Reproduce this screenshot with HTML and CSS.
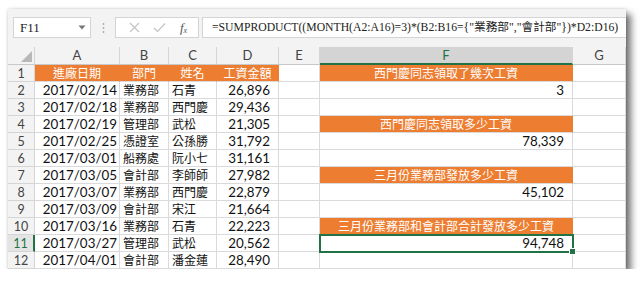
FILE: index.html
```html
<!DOCTYPE html>
<html lang="zh-Hant">
<head>
    <meta charset="UTF-8">
    <title>SUMPRODUCT</title>
    <link rel="stylesheet" href="styles.css">
</head>
<body>
    <div class="window">
        <!-- formula bar -->
        <div class="formula-bar">
            <div class="name-box">
                <span>F11</span>
                <svg width="8" height="5" viewBox="0 0 8 5"><path d="M0.5 0.5 L7.5 0.5 L4 4.5 Z" fill="#777"/></svg>
            </div>
            <div class="grip">
                <svg width="3" height="12" viewBox="0 0 3 12"><circle cx="1.5" cy="2" r="0.9" fill="#aaa"/><circle cx="1.5" cy="6" r="0.9" fill="#aaa"/><circle cx="1.5" cy="10" r="0.9" fill="#aaa"/></svg>
            </div>
            <div class="fx-buttons">
                <svg width="11" height="11" viewBox="0 0 11 11"><path d="M1 1 L10 10 M10 1 L1 10" stroke="#c3c3c3" stroke-width="1.1"/></svg>
                <svg width="13" height="11" viewBox="0 0 13 11"><path d="M1 6 L4.5 9.5 L12 1.5" stroke="#c3c3c3" stroke-width="1.2" fill="none"/></svg>
                <span class="fx"><i>f</i><sub>x</sub></span>
            </div>
            <div class="formula">=SUMPRODUCT((MONTH(A2:A16)=3)*(B2:B16={"業務部","會計部"})*D2:D16)</div>
        </div>

        <!-- sheet -->
        <div class="sheet">
            <div class="corner"><span class="tri"></span></div>
            <div class="ch">A</div>
            <div class="ch">B</div>
            <div class="ch">C</div>
            <div class="ch">D</div>
            <div class="ch">E</div>
            <div class="ch ch-sel">F</div>
            <div class="ch">G</div>

            <div class="rh">1</div>
            <div class="cell hd">進廠日期</div>
            <div class="cell hd">部門</div>
            <div class="cell hd">姓名</div>
            <div class="cell hd">工資金額</div>
            <div class="cell"></div>
            <div class="cell hd">西門慶同志領取了幾次工資</div>
            <div class="cell"></div>

            <div class="rh">2</div>
            <div class="cell date">2017/02/14</div>
            <div class="cell txt">業務部</div>
            <div class="cell txt">石青</div>
            <div class="cell num">26,896</div>
            <div class="cell"></div>
            <div class="cell num">3</div>
            <div class="cell"></div>

            <div class="rh">3</div>
            <div class="cell date">2017/02/18</div>
            <div class="cell txt">業務部</div>
            <div class="cell txt">西門慶</div>
            <div class="cell num">29,436</div>
            <div class="cell"></div>
            <div class="cell"></div>
            <div class="cell"></div>

            <div class="rh">4</div>
            <div class="cell date">2017/02/19</div>
            <div class="cell txt">管理部</div>
            <div class="cell txt">武松</div>
            <div class="cell num">21,305</div>
            <div class="cell"></div>
            <div class="cell hd">西門慶同志領取多少工資</div>
            <div class="cell"></div>

            <div class="rh">5</div>
            <div class="cell date">2017/02/25</div>
            <div class="cell txt">憑證室</div>
            <div class="cell txt">公孫勝</div>
            <div class="cell num">31,792</div>
            <div class="cell"></div>
            <div class="cell num">78,339</div>
            <div class="cell"></div>

            <div class="rh">6</div>
            <div class="cell date">2017/03/01</div>
            <div class="cell txt">船務處</div>
            <div class="cell txt">阮小七</div>
            <div class="cell num">31,161</div>
            <div class="cell"></div>
            <div class="cell"></div>
            <div class="cell"></div>

            <div class="rh">7</div>
            <div class="cell date">2017/03/05</div>
            <div class="cell txt">會計部</div>
            <div class="cell txt">李師師</div>
            <div class="cell num">27,982</div>
            <div class="cell"></div>
            <div class="cell hd">三月份業務部發放多少工資</div>
            <div class="cell"></div>

            <div class="rh">8</div>
            <div class="cell date">2017/03/07</div>
            <div class="cell txt">業務部</div>
            <div class="cell txt">西門慶</div>
            <div class="cell num">22,879</div>
            <div class="cell"></div>
            <div class="cell num">45,102</div>
            <div class="cell"></div>

            <div class="rh">9</div>
            <div class="cell date">2017/03/09</div>
            <div class="cell txt">會計部</div>
            <div class="cell txt">宋江</div>
            <div class="cell num">21,664</div>
            <div class="cell"></div>
            <div class="cell"></div>
            <div class="cell"></div>

            <div class="rh">10</div>
            <div class="cell date">2017/03/16</div>
            <div class="cell txt">業務部</div>
            <div class="cell txt">石青</div>
            <div class="cell num">22,223</div>
            <div class="cell"></div>
            <div class="cell hd">三月份業務部和會計部合計發放多少工資</div>
            <div class="cell"></div>

            <div class="rh rh-sel">11</div>
            <div class="cell date">2017/03/27</div>
            <div class="cell txt">管理部</div>
            <div class="cell txt">武松</div>
            <div class="cell num">20,562</div>
            <div class="cell"></div>
            <div class="cell num sel">94,748</div>
            <div class="cell"></div>

            <div class="rh">12</div>
            <div class="cell date">2017/04/01</div>
            <div class="cell txt">會計部</div>
            <div class="cell txt">潘金蓮</div>
            <div class="cell num">28,490</div>
            <div class="cell"></div>
            <div class="cell"></div>
            <div class="cell"></div>
        </div>
    </div>
</body>
</html>
```

FILE: styles.css
```css
* {
    box-sizing: border-box;
}

body {
    margin: 0;
    padding: 9px 0 0 8px;
    background-color: white;
    font-family: Lato, "Noto Sans CJK TC", sans-serif;
}

.window {
    width: 618px;
    height: 260px;
    background-color: white;
    overflow: hidden;
    box-shadow: 5px 5px 7px rgba(0, 0, 0, 0.55), 0 0 3px rgba(0, 0, 0, 0.18);
}

/* formula bar */
.formula-bar {
    height: 38px;
    background-color: #f3f3f3;
    display: flex;
    align-items: flex-start;
    padding: 8px 0 0 5px;
}

.name-box {
    width: 78px;
    height: 21px;
    background-color: white;
    border: 1px solid #d4d4d4;
    display: flex;
    align-items: center;
    justify-content: space-between;
    padding: 0 4px 0 6px;
    font-family: "Liberation Serif", "Noto Sans CJK TC", serif;
    font-size: 13px;
    color: #222;
}

.grip {
    width: 24px;
    height: 21px;
    display: flex;
    align-items: center;
    justify-content: center;
}

.fx-buttons {
    width: 84px;
    height: 21px;
    background-color: white;
    border: 1px solid #d4d4d4;
    display: flex;
    align-items: center;
    justify-content: space-around;
    padding: 0 4px 0 6px;
}

.fx {
    font-family: "Liberation Serif", serif;
    font-size: 13px;
    color: #555;
}

.fx sub {
    font-size: 8px;
    vertical-align: -1px;
    font-style: italic;
}

.formula {
    flex: 1;
    height: 21px;
    margin-left: 3px;
    background-color: white;
    border: 1px solid #d4d4d4;
    border-right: none;
    padding-left: 9px;
    line-height: 19px;
    font-family: "Liberation Serif", "Noto Sans CJK TC", serif;
    font-size: 11.7px;
    color: #222;
    white-space: nowrap;
    overflow: hidden;
}

/* sheet grid */
.sheet {
    display: grid;
    grid-template-columns: 27px 85px 49px 48px 62px 41px 253px 53px;
    grid-template-rows: 18px;
    grid-auto-rows: 17px;
}

.corner,
.ch,
.rh {
    background-color: #f3f3f3;
    color: #444;
    border-right: 1px solid #d5d5d5;
    border-bottom: 1px solid #c8c8c8;
}

.corner {
    display: flex;
    align-items: flex-end;
    justify-content: flex-end;
    padding: 0 2px 2px 0;
}

.tri {
    width: 0;
    height: 0;
    border-left: 11px solid transparent;
    border-bottom: 11px solid #b8b8b8;
}

.ch {
    text-align: center;
    font-size: 13px;
    line-height: 17px;
}

.ch-sel {
    background-color: #d4d4d4;
    color: #217346;
    border-bottom: 2px solid #217346;
}

.rh {
    text-align: center;
    font-size: 12.5px;
    line-height: 17px;
    border-bottom-color: #d5d5d5;
}

.rh-sel {
    background-color: #e4e4e4;
    color: #217346;
    border-right: 2px solid #217346;
}

.cell {
    border-right: 1px solid #dadada;
    border-bottom: 1px solid #dadada;
    font-size: 13.4px;
    line-height: 17px;
    color: #111;
    white-space: nowrap;
    overflow: visible;
}

.cell.hd {
    background-color: #ed7d31;
    border-right-color: #ed7d31;
    color: white;
    text-align: center;
    font-size: 12px;
}

.date {
    text-align: right;
    padding-right: 2px;
}

.txt {
    font-size: 12px;
    padding-left: 3px;
}

.num {
    text-align: right;
    padding-right: 8px;
}

.sel {
    position: relative;
    outline: 2px solid #217346;
    outline-offset: -1px;
}

.sel::after {
    content: "";
    position: absolute;
    right: -4px;
    bottom: -4px;
    width: 5px;
    height: 5px;
    background-color: #217346;
    border: 1px solid white;
}
```
